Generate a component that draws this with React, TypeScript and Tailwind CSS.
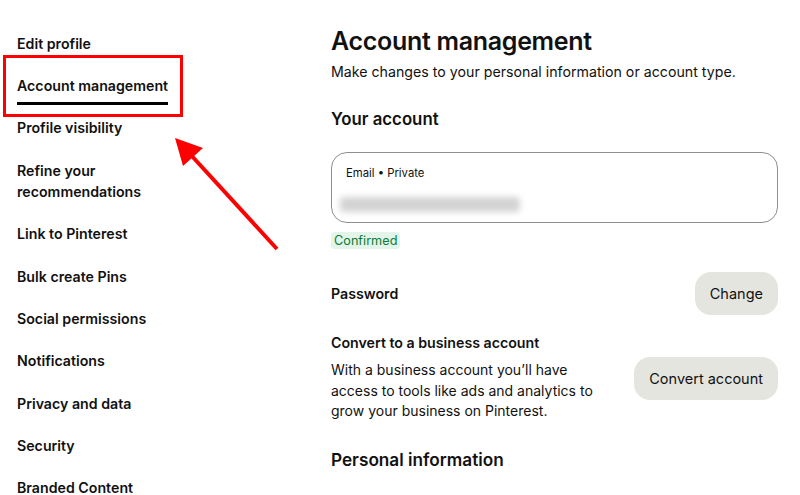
import React from "react";

const NAV_ITEMS = [
  "Edit profile",
  "Account management",
  "Profile visibility",
  "Refine your recommendations",
  "Link to Pinterest",
  "Bulk create Pins",
  "Social permissions",
  "Notifications",
  "Privacy and data",
  "Security",
  "Branded Content",
];

function Sidebar() {
  return (
    <nav className="w-[331px] shrink-0 pl-[17px] pt-[22px]">
      <ul className="flex flex-col">
        {NAV_ITEMS.map((item) => {
          const active = item === "Account management";
          return (
            <li key={item} className="py-[10.7px]">
              <span
                className={
                  active
                    ? "mb-[-9px] block w-fit whitespace-nowrap border-b-[3px] border-black pb-[6px] text-[14.2px] leading-[21px] font-semibold text-[#111]"
                    : "block w-[140px] text-[14.2px] leading-[21px] font-semibold text-[#111]"
                }
              >
                {item}
              </span>
            </li>
          );
        })}
      </ul>
    </nav>
  );
}

function Annotation() {
  return (
    <>
      {/* red highlight box */}
      <div className="pointer-events-none absolute left-[3px] top-[55px] h-[62px] w-[180px] border-[3px] border-[#ff0000]" />
      {/* arrow */}
      <svg
        className="pointer-events-none absolute left-0 top-0"
        width="800"
        height="495"
        viewBox="0 0 800 495"
      >
        <line x1="277" y1="249" x2="190" y2="154" stroke="#ff0000" strokeWidth="4" />
        <polygon points="175,138 203,148 183,166" fill="#ff0000" />
      </svg>
    </>
  );
}

export default function App() {
  return (
    <div
      className="relative h-[495px] w-[800px] overflow-hidden bg-white text-[#111]"
      style={{ fontFamily: "Inter, 'Noto Sans', sans-serif" }}
    >
      <div className="flex">
        <Sidebar />

        <main className="flex-1 pr-[22px] pt-[26px]">
          <h1 className="text-[25px] leading-[30px] font-semibold tracking-[-0.3px]">
            Account management
          </h1>
          <p className="mt-[6px] text-[14.2px] leading-[20px] text-[#111]">
            Make changes to your personal information or account type.
          </p>

          <h2 className="mt-[26px] text-[16.8px] leading-[22px] font-semibold">Your account</h2>

          <div className="mt-[22px] h-[71px] rounded-[16px] border border-[#8f8f8f] px-[14px] pt-[12px]">
            <div className="text-[11.3px] leading-[16px]">Email • Private</div>
            <div className="ml-[-6px] mt-[16px] h-[15px] w-[180px] rounded-sm bg-[#d3d3d3] blur-[3px]" />
          </div>

          <div className="mt-[9px] w-fit rounded-[4px] bg-[#e3f5e8] px-[3px] text-[12.7px] leading-[17px] text-[#0b7a36]">
            Confirmed
          </div>

          <div className="mt-[23px] flex items-center justify-between">
            <span className="text-[14.2px] font-semibold">Password</span>
            <button className="h-[43px] rounded-[16px] bg-[#e5e5e0] px-[15px] text-[14.5px] text-[#111]">
              Change
            </button>
          </div>

          <div className="mt-[18px] flex items-center justify-between">
            <div>
              <div className="text-[14.2px] leading-[20px] font-semibold">
                Convert to a business account
              </div>
              <p className="mt-[7px] w-[270px] text-[14px] leading-[20.5px]">
                With a business account you’ll have access to tools like ads and analytics to grow
                your business on Pinterest.
              </p>
            </div>
            <button className="mt-[3px] h-[43px] rounded-[16px] bg-[#e5e5e0] px-[15px] text-[14.5px] text-[#111]">
              Convert account
            </button>
          </div>

          <h2 className="mt-[26px] text-[17.2px] leading-[24px] font-semibold">
            Personal information
          </h2>
        </main>
      </div>

      <Annotation />
    </div>
  );
}
